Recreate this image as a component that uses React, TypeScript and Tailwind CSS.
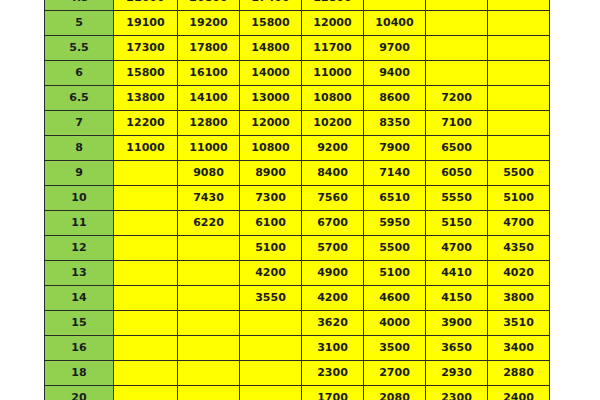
import React from "react";

const rows: [string, string[]][] = [
  ["4.5", ["21600", "20800", "17400", "12800", "", "", ""]],
  ["5", ["19100", "19200", "15800", "12000", "10400", "", ""]],
  ["5.5", ["17300", "17800", "14800", "11700", "9700", "", ""]],
  ["6", ["15800", "16100", "14000", "11000", "9400", "", ""]],
  ["6.5", ["13800", "14100", "13000", "10800", "8600", "7200", ""]],
  ["7", ["12200", "12800", "12000", "10200", "8350", "7100", ""]],
  ["8", ["11000", "11000", "10800", "9200", "7900", "6500", ""]],
  ["9", ["", "9080", "8900", "8400", "7140", "6050", "5500"]],
  ["10", ["", "7430", "7300", "7560", "6510", "5550", "5100"]],
  ["11", ["", "6220", "6100", "6700", "5950", "5150", "4700"]],
  ["12", ["", "", "5100", "5700", "5500", "4700", "4350"]],
  ["13", ["", "", "4200", "4900", "5100", "4410", "4020"]],
  ["14", ["", "", "3550", "4200", "4600", "4150", "3800"]],
  ["15", ["", "", "", "3620", "4000", "3900", "3510"]],
  ["16", ["", "", "", "3100", "3500", "3650", "3400"]],
  ["18", ["", "", "", "2300", "2700", "2930", "2880"]],
  ["20", ["", "", "", "1700", "2080", "2300", "2400"]],
  ["22", ["", "", "", "1300", "1600", "1800", "1900"]],
];

export default function App() {
  return (
    <div className="w-[600px] h-[400px] overflow-hidden bg-white">
      <div className="pl-[44px] mt-[-15px]">
        <div
          className="grid w-fit grid-cols-[68px_63px_repeat(6,61px)] gap-px bg-[#2a2a2a] p-px text-[11px] font-bold text-[#1c1c1c]"
          style={{ fontFamily: '"DejaVu Sans", Verdana, sans-serif' }}
        >
          {rows.map(([label, vals]) => (
            <React.Fragment key={label}>
              <div className="h-[24px] flex items-center justify-center bg-[#92d050] mr-[-1px] border-r border-[#3a3a3a]">
                {label}
              </div>
              {vals.map((v, i) => (
                <div
                  key={i}
                  className="h-[24px] flex items-center justify-center bg-[#ffff00]"
                >
                  {v}
                </div>
              ))}
            </React.Fragment>
          ))}
        </div>
      </div>
    </div>
  );
}
